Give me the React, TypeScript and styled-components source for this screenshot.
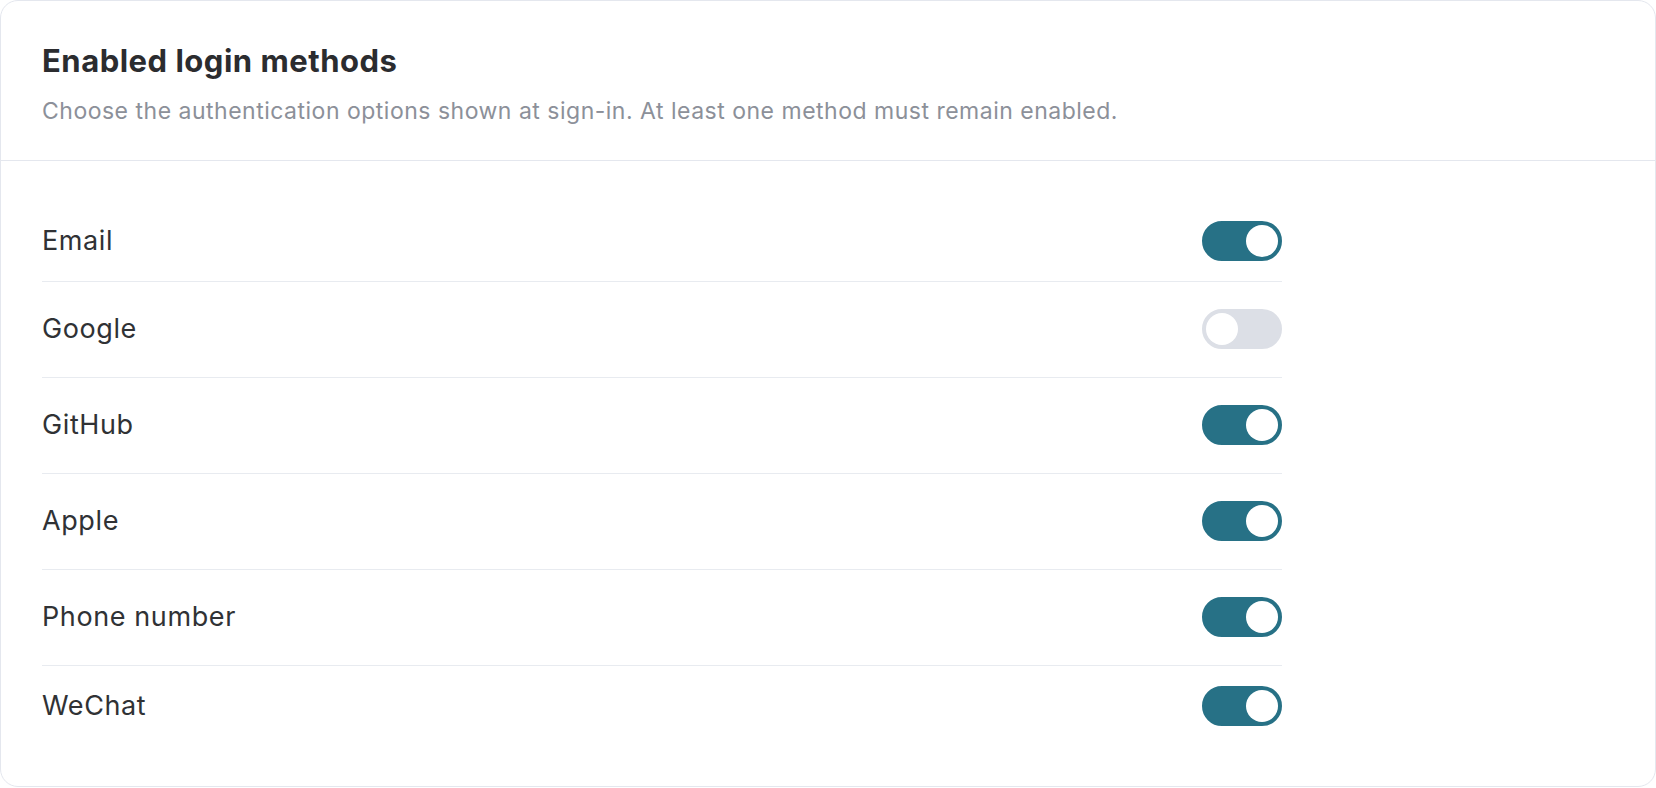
import * as React from "react";
import styled, { createGlobalStyle } from "styled-components";

const GlobalStyle = createGlobalStyle`
  * { box-sizing: border-box; }
  html, body {
    margin: 0;
    padding: 0;
    background: #ffffff;
    font-family: Inter, "Noto Sans", sans-serif;
  }
`;

const Card = styled.section`
  border: 1px solid #e4e7ee;
  border-radius: 18px;
  background: #ffffff;
  overflow: hidden;
`;

const Header = styled.header`
  display: flex;
  flex-direction: column;
  padding: 40px 41px 34px;
  border-bottom: 1px solid #e4e7ee;
`;

const Title = styled.h2`
  margin: 0;
  font-size: 31px;
  line-height: 40px;
  font-weight: 700;
  letter-spacing: 0.5px;
  color: #2b2c2f;
`;

const Subtitle = styled.p`
  margin: 15px 0 0;
  font-size: 23px;
  line-height: 30px;
  letter-spacing: 0.5px;
  color: #8c9099;
`;

const Body = styled.div`
  padding: 60px 41px;
`;

const List = styled.ul`
  list-style: none;
  margin: 0;
  padding: 0;
  max-width: 1240px;
`;

const Row = styled.li`
  display: flex;
  align-items: center;
  justify-content: space-between;
  padding: 27px 0 28px;
  border-bottom: 1px solid #e8ebf0;

  &:first-child {
    padding-top: 0;
    padding-bottom: 20px;
  }
  &:last-child {
    padding-top: 20px;
    padding-bottom: 0;
    border-bottom: none;
  }
`;

const Label = styled.span`
  font-size: 27px;
  line-height: 40px;
  letter-spacing: 0.6px;
  color: #303235;
`;

const Track = styled.button<{ $on: boolean }>`
  position: relative;
  width: 80px;
  height: 40px;
  padding: 0;
  border-radius: 20px;
  border: 2px solid ${(p) => (p.$on ? "#277186" : "#dcdfe6")};
  background: ${(p) => (p.$on ? "#277186" : "#dcdfe6")};
  cursor: pointer;
  flex-shrink: 0;
`;

const Knob = styled.span<{ $on: boolean }>`
  position: absolute;
  top: 2px;
  left: ${(p) => (p.$on ? "42px" : "2px")};
  width: 32px;
  height: 32px;
  border-radius: 50%;
  background: #ffffff;
  transition: left 0.15s ease;
`;

const methods = [
  { id: "email", name: "Email", on: true },
  { id: "google", name: "Google", on: false },
  { id: "github", name: "GitHub", on: true },
  { id: "apple", name: "Apple", on: true },
  { id: "phone", name: "Phone number", on: true },
  { id: "wechat", name: "WeChat", on: true },
];

const App: React.FC = () => {
  const [state, setState] = React.useState(methods);

  const toggle = React.useCallback((id: string) => {
    setState((prev) => {
      const next = prev.map((m) => (m.id === id ? { ...m, on: !m.on } : m));
      // at least one method has to stay on
      if (!next.some((m) => m.on)) return prev;
      return next;
    });
  }, []);

  return (
    <>
      <GlobalStyle />
      <Card>
        <Header>
          <Title>Enabled login methods</Title>
          <Subtitle>
            Choose the authentication options shown at sign-in. At least one method must remain enabled.
          </Subtitle>
        </Header>
        <Body>
          <List>
            {state.map((m) => (
              <Row key={m.id}>
                <Label>{m.name}</Label>
                <Track
                  type="button"
                  role="switch"
                  aria-checked={m.on}
                  aria-label={m.name}
                  $on={m.on}
                  onClick={() => toggle(m.id)}
                >
                  <Knob $on={m.on} />
                </Track>
              </Row>
            ))}
          </List>
        </Body>
      </Card>
    </>
  );
};

export default App;
